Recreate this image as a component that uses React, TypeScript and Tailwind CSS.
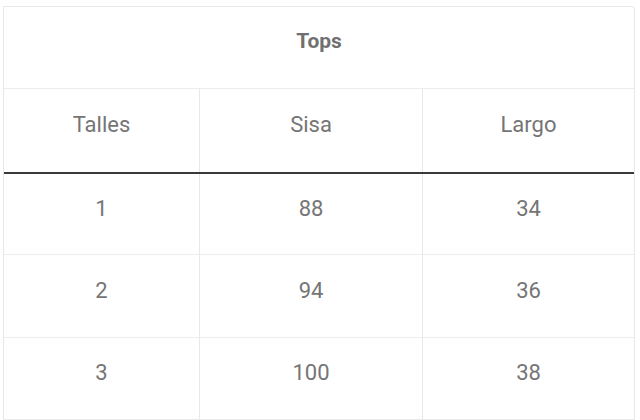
const rows = [
  ["1", "88", "34"],
  ["2", "94", "36"],
  ["3", "100", "38"],
];

const cols = "grid grid-cols-[196px_223px_1fr]";

export default function App() {
  return (
    <div className="min-h-[420px] bg-white pl-[3px] pt-[6px] font-['Roboto',sans-serif] text-[#757575]">
      <div className="w-[632px] overflow-hidden rounded-tr-[3px] border border-[#e8e8e8]">
        <div className="flex h-[82px] items-center justify-center border-b border-[#ececec] pb-[12px] text-[21px] font-bold text-[#707070]">
          Tops
        </div>
        <div className={`${cols} h-[85px] border-b-2 border-[#3a3a3a] text-[22px]`}>
          {["Talles", "Sisa", "Largo"].map((h, i) => (
            <div
              key={h}
              className={`flex items-center justify-center pb-[12px] ${i < 2 ? "border-r border-[#e8e8e8]" : ""}`}
            >
              {h}
            </div>
          ))}
        </div>
        {rows.map((r, ri) => (
          <div
            key={ri}
            className={`${cols} text-[22px] ${ri === 1 ? "h-[83px]" : "h-[81px]"} ${ri < 2 ? "border-b border-[#ececec]" : ""}`}
          >
            {r.map((c, i) => (
              <div
                key={i}
                className={`flex items-center justify-center pb-[12px] ${i < 2 ? "border-r border-[#e8e8e8]" : ""}`}
              >
                {c}
              </div>
            ))}
          </div>
        ))}
      </div>
    </div>
  );
}
